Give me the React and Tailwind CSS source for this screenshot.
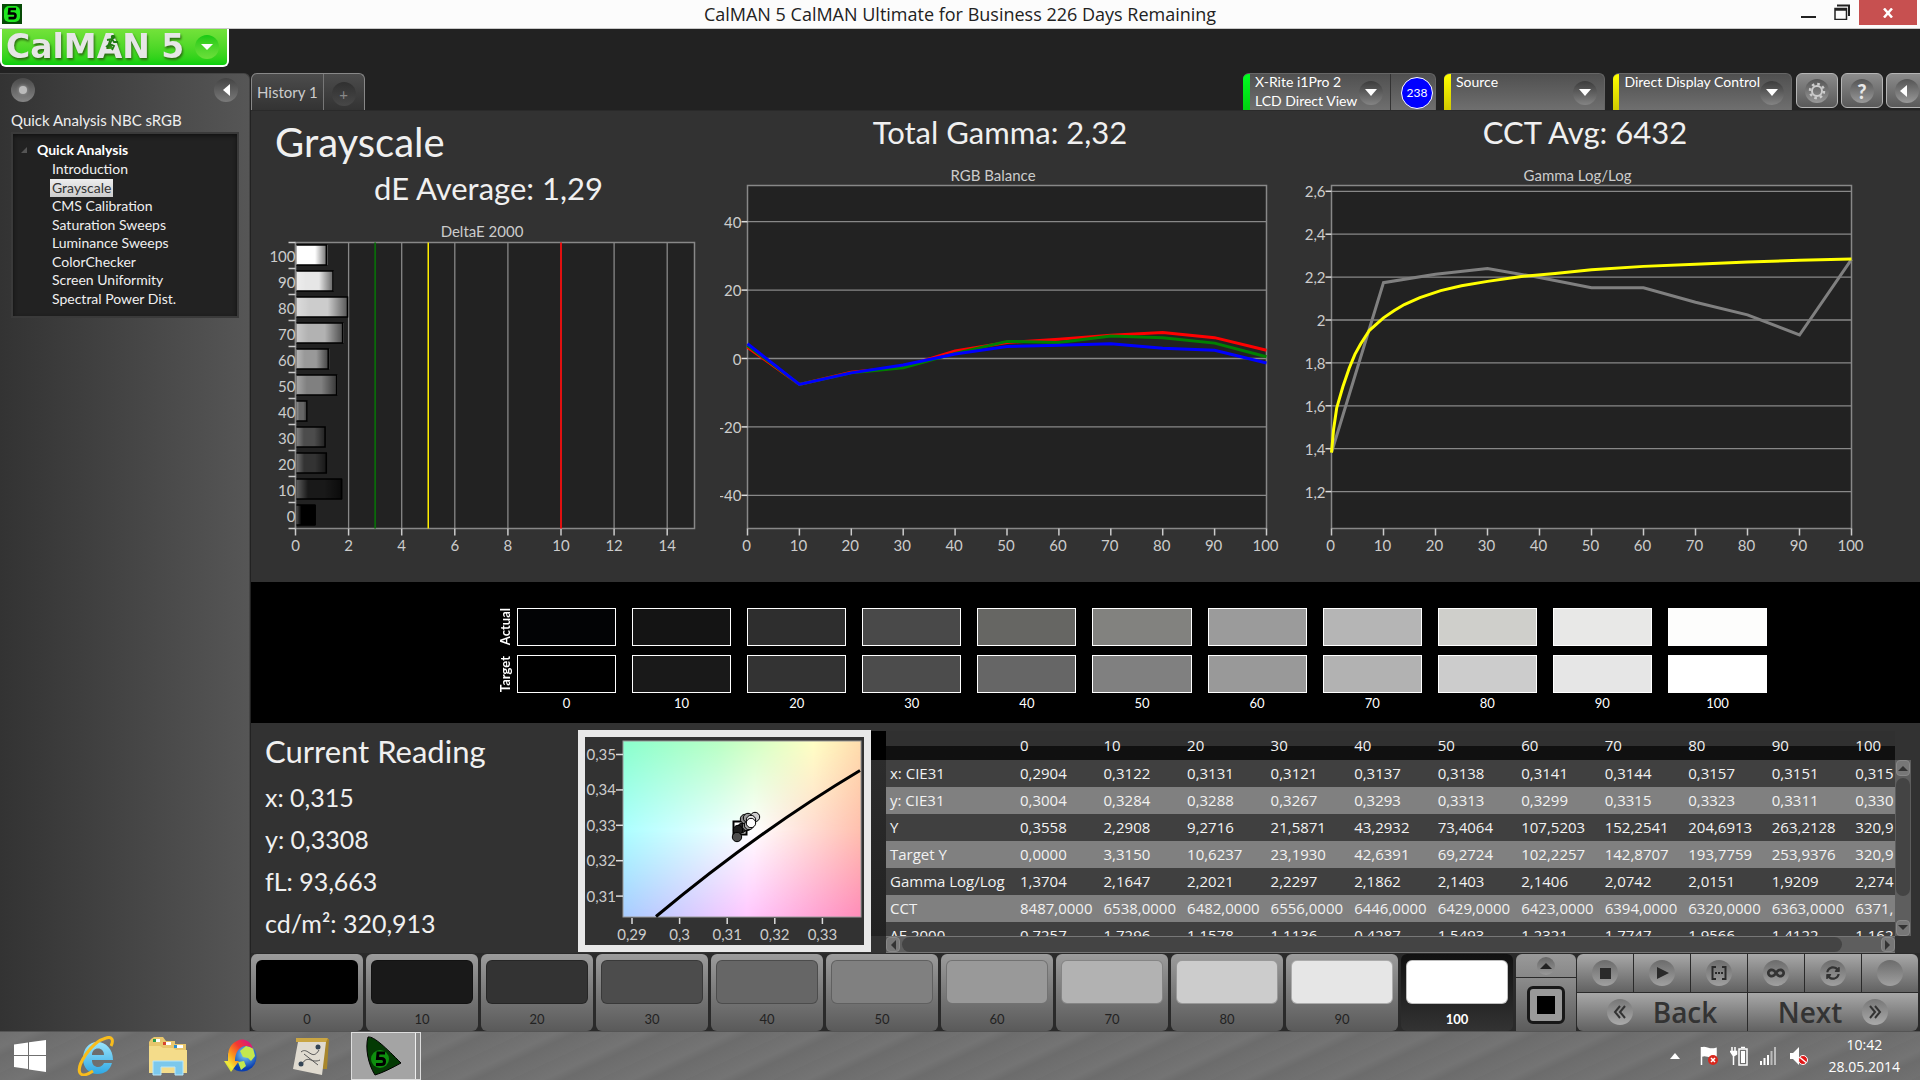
import { FaInfinity, FaSyncAlt } from 'react-icons/fa';
import clsx from 'clsx';

const LEVELS = [0, 10, 20, 30, 40, 50, 60, 70, 80, 90, 100];

const TARGET = ['#000000', '#191919', '#333333', '#4c4c4c', '#666666', '#808080', '#999999', '#b2b2b2', '#cccccc', '#e6e6e6', '#ffffff'];
const ACTUAL = ['#020305', '#141414', '#2e2e2e', '#494949', '#666663', '#82827f', '#9b9b9b', '#b5b5b5', '#cfcfcb', '#e8e8e7', '#fdfdfc'];

const DELTA_E = [0.7257, 1.7296, 1.1578, 1.1136, 0.4287, 1.5493, 1.2321, 1.7747, 1.9566, 1.4122, 1.162];

const TREE = [
  'Introduction',
  'Grayscale',
  'CMS Calibration',
  'Saturation Sweeps',
  'Luminance Sweeps',
  'ColorChecker',
  'Screen Uniformity',
  'Spectral Power Dist.',
];

const TABLE = [
  ['x: CIE31', '0,2904', '0,3122', '0,3131', '0,3121', '0,3137', '0,3138', '0,3141', '0,3144', '0,3157', '0,3151', '0,315'],
  ['y: CIE31', '0,3004', '0,3284', '0,3288', '0,3267', '0,3293', '0,3313', '0,3299', '0,3315', '0,3323', '0,3311', '0,330'],
  ['Y', '0,3558', '2,2908', '9,2716', '21,5871', '43,2932', '73,4064', '107,5203', '152,2541', '204,6913', '263,2128', '320,9'],
  ['Target Y', '0,0000', '3,3150', '10,6237', '23,1930', '42,6391', '69,2724', '102,2257', '142,8707', '193,7759', '253,9376', '320,9'],
  ['Gamma Log/Log', '1,3704', '2,1647', '2,2021', '2,2297', '2,1862', '2,1403', '2,1406', '2,0742', '2,0151', '1,9209', '2,274'],
  ['CCT', '8487,0000', '6538,0000', '6482,0000', '6556,0000', '6446,0000', '6429,0000', '6423,0000', '6394,0000', '6320,0000', '6363,0000', '6371,'],
  ['ΔE 2000', '0,7257', '1,7296', '1,1578', '1,1136', '0,4287', '1,5493', '1,2321', '1,7747', '1,9566', '1,4122', '1,162'],
];

function toPoints(values, sx, sy) {
  return values.map((v, i) => `${sx(LEVELS[i])},${sy(v)}`).join(' ');
}

function TitleBar() {
  return (
    <header className="relative flex h-[29px] items-center justify-center border-b border-[#c9c9c9] bg-[#fcfcfc]">
      <svg viewBox="0 0 20 20" className="absolute left-0.5 top-1 size-5">
        <rect width="20" height="20" fill="#064a06" />
        <rect x="2" y="2" width="16" height="16" rx="5" fill="#1fe81f" />
        <path d="M14 5H7.5L7 9.5h4.5q2 0 2 2.300t-2 2.300H6.500" fill="none" stroke="#000" strokeWidth="2.600" />
      </svg>
      <h1 className="font-['Open_Sans',sans-serif] text-lg leading-7 text-[#222]">
        CalMAN 5 CalMAN Ultimate for Business 226 Days Remaining
      </h1>
      <div className="absolute right-[3px] top-0 flex">
        <button type="button" aria-label="Minimize" className="flex h-[25px] w-8 items-start justify-center">
          <span className="mt-4 h-0.5 w-[15px] bg-[#222]" />
        </button>
        <button type="button" aria-label="Restore" className="flex h-[25px] w-[35px] justify-center pt-1">
          <svg viewBox="0 0 16 16" className="size-4" fill="none" stroke="#222">
            <path d="M1 15.500V4.500H12.500V15.500Z M1 6H12.500" strokeWidth="1.500" />
            <path d="M3 1.500H15V12" strokeWidth="2" />
          </svg>
        </button>
        <button type="button" aria-label="Close" className="flex h-[25px] w-[58px] items-center justify-center bg-[#c75050]">
          <svg viewBox="0 0 10 10" className="size-2.5" stroke="#fff" strokeWidth="2.500">
            <path d="M1 0.500 9 9.500M9 0.500 1 9.500" />
          </svg>
        </button>
      </div>
    </header>
  );
}

function Logo() {
  return (
    <button
      type="button"
      aria-label="CalMAN 5 menu"
      className="flex h-[38px] w-[229px] items-center rounded-b-md border-2 border-t-0 border-white bg-linear-to-b from-[#73e23a] to-[#06cf0d] pl-1"
    >
      <span className="relative w-[189px] text-left font-['DejaVu_Sans',sans-serif] text-[33px] leading-8 font-bold whitespace-nowrap text-[#e6e6e6] drop-shadow-[1px_2px_1px_#2a6a10]">
        CalMAN 5
        <svg viewBox="0 0 16 16" className="absolute left-[98px] top-1 size-4" fill="none" stroke="#1f7a12" strokeWidth="1.800">
          <circle cx="9" cy="2" r="1.300" fill="#1f7a12" />
          <path d="M3 5l5-1 2 3 4 0M8 4L6 9l4 2-2 4M6 9l-4 3" />
        </svg>
      </span>
      <span className="flex size-6 items-center justify-center rounded-full bg-linear-to-b from-[#12c912] to-[#6be03a]">
        <svg viewBox="0 0 12 6" className="h-1.5 w-3" fill="#fff">
          <path d="M0 0H12L6 6Z" />
        </svg>
      </span>
    </button>
  );
}

function Round({ className, children }) {
  return (
    <span className={clsx('flex shrink-0 items-center justify-center rounded-full', className)}>
      {children}
    </span>
  );
}

function Sidebar() {
  return (
    <aside className="flex w-[250px] shrink-0 flex-col rounded-tr-md border-t border-r border-[#444] bg-linear-to-r from-[#333] to-[#565656] pt-1">
      <div className="flex items-center justify-between pr-[11px] pl-[11px]">
        <button type="button" aria-label="Record">
          <Round className="size-6 bg-linear-to-b from-[#4a4a4a] to-[#858585]">
            <span className="size-2 rounded-full bg-[#bbb] shadow-[0_0_3px_1px_#888]" />
          </Round>
        </button>
        <button type="button" aria-label="Collapse panel">
          <Round className="size-6 bg-linear-to-b from-[#444] to-[#7a7a7a]">
            <svg viewBox="0 0 7 12" className="h-3 w-[7px]" fill="#fff">
              <path d="M7 0V12L0 6Z" />
            </svg>
          </Round>
        </button>
      </div>
      <h2 className="mt-[7px] pl-[11px] text-[15px] leading-[23px] text-[#eee]">Quick Analysis NBC sRGB</h2>
      <nav className="mr-2.5 ml-[11px] border-2 border-[#3a3a3a] bg-[#222] pt-1.5 pb-2 shadow-[inset_0_2px_4px_#111]">
        <div className="flex items-center text-sm leading-5 font-bold text-white">
          <svg viewBox="0 0 6 6" className="mr-2.5 ml-2 size-1.5" fill="#555">
            <path d="M6 0V6H0Z" />
          </svg>
          Quick Analysis
        </div>
        <ul className="flex h-[148px] flex-col justify-between pl-[37px] text-sm leading-[18px] text-[#f0f0f0]">
          {TREE.map((item) => (
            <li key={item} className="flex">
              <a
                href="#"
                className={clsx('px-0.5', item === 'Grayscale' && 'bg-linear-to-b from-[#eee] to-[#ccc] text-[#333]')}
              >
                {item}
              </a>
            </li>
          ))}
        </ul>
      </nav>
    </aside>
  );
}

function DownArrow() {
  return (
    <Round className="size-6 bg-linear-to-b from-[#3c3c3c] to-[#848484]">
      <svg viewBox="0 0 12 7" className="h-[7px] w-3" fill="#fff">
        <path d="M0 0H12L6 7Z" />
      </svg>
    </Round>
  );
}

function DeviceButton({ lines, color, className }) {
  return (
    <button
      type="button"
      className={clsx('flex h-[37px] items-center overflow-hidden pr-[7px] text-left text-sm leading-[19px] text-white', className)}
    >
      <span className={clsx('mr-[5px] h-full w-[7px]', color)} />
      <span className="-mt-0.5 flex-1 self-start whitespace-nowrap">
        {lines.map((line) => (
          <span key={line} className="block">{line}</span>
        ))}
      </span>
      <DownArrow />
    </button>
  );
}

function ToolButton({ label, children }) {
  return (
    <button
      type="button"
      aria-label={label}
      className="flex h-[35px] w-[42px] shrink-0 items-center justify-center rounded-md border border-[#b5b5b5] bg-linear-to-b from-[#8c8c8c] to-[#5a5a5a]"
    >
      <Round className="size-6 bg-linear-to-b from-[#555] to-[#999]">{children}</Round>
    </button>
  );
}

function TopTabs() {
  const shell = 'rounded-t-md border-t border-r border-[#666] bg-linear-to-b from-[#505050] to-[#707070]';
  return (
    <div className="flex h-[37px] items-start justify-between">
      <div className="flex h-full rounded-t-md border border-b-0 border-[#888] bg-linear-to-b from-[#4c4c4c] to-[#333] text-[15px] text-[#ccc]">
        <button type="button" className="border-r border-[#777] px-[5px]">History 1</button>
        <button type="button" aria-label="Add history" className="flex w-10 items-center justify-center pt-1">
          <Round className="size-6 bg-linear-to-b from-[#303030] to-[#484848] text-[#888]">+</Round>
        </button>
      </div>
      <div className="flex items-start gap-2 overflow-hidden">
        <div className={clsx('flex w-[193px] overflow-hidden', shell)}>
          <DeviceButton
            lines={['X-Rite i1Pro 2', 'LCD Direct View']}
            color="bg-linear-to-b from-[#00ff20] to-[#00d010]"
            className="flex-1 border-r border-[#333]"
          />
          <Round className="mr-0.5 ml-2.5 size-8 self-center border border-white bg-[#0000ff] text-xs text-white">238</Round>
        </div>
        <div className={clsx('w-[161px] overflow-hidden', shell)}>
          <DeviceButton lines={['Source']} color="bg-linear-to-b from-[#ffff00] to-[#d0c800]" className="w-full" />
        </div>
        <div className={clsx('w-[179px] overflow-hidden', shell)}>
          <DeviceButton
            lines={['Direct Display Control']}
            color="bg-linear-to-b from-[#ffff00] to-[#d0c800]"
            className="w-full"
          />
        </div>
        <div className="-mr-2 -ml-1 flex gap-[3px]">
          <ToolButton label="Settings">
            <svg viewBox="0 0 18 18" className="size-[18px]" fill="none" stroke="#ccc">
              <circle cx="9" cy="9" r="5" strokeWidth="2" />
              <circle cx="9" cy="9" r="7" strokeWidth="2.500" strokeDasharray="2.600 2.900" />
            </svg>
          </ToolButton>
          <ToolButton label="Help">
            <span className="text-xl leading-6 font-black text-[#e8e8e8]">?</span>
          </ToolButton>
          <ToolButton label="Collapse">
            <svg viewBox="0 0 7 12" className="mr-2 h-3 w-[7px]" fill="#fff">
              <path d="M7 0V12L0 6Z" />
            </svg>
          </ToolButton>
        </div>
      </div>
    </div>
  );
}

function DeltaChart() {
  const left = 44.5;
  const right = 443.5;
  const top = 22.5;
  const bottom = 308.5;
  const sx = (v) => left + v * 26.55;
  const row = 26;
  return (
    <svg viewBox="0 0 469 342" className="h-auto w-full text-[15px]" fill="#ccc">
      <defs>
        <linearGradient id="shine">
          <stop offset="0" stopColor="#fff" stopOpacity="0.3" />
          <stop offset="0.25" stopColor="#fff" stopOpacity="0" />
          <stop offset="0.6" stopColor="#000" stopOpacity="0" />
          <stop offset="1" stopColor="#000" stopOpacity="0.6" />
        </linearGradient>
      </defs>
      <text x="231" y="17" textAnchor="middle">DeltaE 2000</text>
      <rect x={left} y={top} width={right - left} height={bottom - top} fill="#222" stroke="#888" strokeWidth="1.500" />
      {[0, 2, 4, 6, 8, 10, 12, 14].map((v) => (
        <g key={v}>
          <path d={`M${sx(v)} ${top}V${bottom}`} stroke="#888" strokeWidth="1.300" />
          <path d={`M${sx(v)} ${bottom}v7`} stroke="#ccc" strokeWidth="1.500" />
          <text x={sx(v)} y="331" textAnchor="middle">{v}</text>
        </g>
      ))}
      {[...LEVELS].reverse().map((level, i) => {
        const y = top + i * row;
        const n = level / 10;
        const w = DELTA_E[n] * 26.55;
        return (
          <g key={level}>
            <path d={`M${left - 7} ${y}h7`} stroke="#ccc" strokeWidth="1.500" />
            <text x={left} y={y + 19} textAnchor="end">{level}</text>
            <rect x={left + 1} y={y + 2.5} width={w} height="20" fill={TARGET[n]} />
            <rect x={left + 1} y={y + 2.5} width={w} height="20" fill="url(#shine)" />
            <path d={`M${left + 1} ${y + 2.5}h${w - 1}v20h${1 - w}`} fill="none" stroke="#000" strokeWidth="1.500" />
          </g>
        );
      })}
      <path d={`M${left - 7} ${bottom}h7`} stroke="#ccc" strokeWidth="1.500" />
      <path d={`M${sx(3)} ${top}V${bottom}`} stroke="#0a6a0a" strokeWidth="1.800" />
      <path d={`M${sx(5)} ${top}V${bottom}`} stroke="#ffee00" strokeWidth="1.500" />
      <path d={`M${sx(10)} ${top}V${bottom}`} stroke="#e01010" strokeWidth="2" />
    </svg>
  );
}

function PlotFrame({ title, left, right, yTicks, sx, sy }) {
  return (
    <>
      <text x={(left + right) / 2 - 14} y="17" textAnchor="middle">{title}</text>
      <rect x={left} y="21.500" width={right - left} height="343" fill="#222" stroke="#888" strokeWidth="1.500" />
      {yTicks.map((v) => (
        <g key={v}>
          <path d={`M${left} ${sy(v)}H${right}`} stroke="#888" strokeWidth="1.300" />
          <path d={`M${left - 6} ${sy(v)}h6`} stroke="#ddd" strokeWidth="1.500" />
          <text x={left - 6} y={sy(v) + 6} textAnchor="end">{String(v).replace('.', ',')}</text>
        </g>
      ))}
      {LEVELS.map((v) => (
        <g key={v}>
          <path d={`M${sx(v)} 364.500v7`} stroke="#ccc" strokeWidth="1.500" />
          <text x={sx(v) - 1} y="387" textAnchor="middle">{v}</text>
        </g>
      ))}
    </>
  );
}

function BalanceChart() {
  const sx = (v) => 27.5 + v * 5.19;
  const sy = (v) => 194.5 - v * 3.42;
  const red = [3.3, -7.6, -4, -2.5, 2.2, 4.7, 5.6, 6.8, 7.6, 6.1, 2.4];
  const green = [3.8, -7.6, -4.2, -2.7, 1.5, 5, 4.7, 6.6, 6.1, 4.5, 0.5];
  const blue = [4.3, -7.6, -4.2, -1.9, 1.3, 3.5, 3.9, 4.3, 3, 2.4, -1.3];
  return (
    <svg viewBox="0 0 580 398" className="h-auto w-full text-[15px]" fill="#ccc">
      <PlotFrame title="RGB Balance" left={27.5} right={546.5} yTicks={[40, 20, 0, -20, -40]} sx={sx} sy={sy} />
      <g fill="none" strokeWidth="3">
        <polyline points={toPoints(red, sx, sy)} stroke="#ff0000" />
        <polyline points={toPoints(green, sx, sy)} stroke="#008000" />
        <polyline points={toPoints(blue, sx, sy)} stroke="#0000ff" />
      </g>
    </svg>
  );
}

function GammaChart() {
  const sx = (v) => 31.5 + v * 5.2;
  const sy = (v) => 156 - (v - 2) * 214.5;
  const measured = [1.382, 2.174, 2.213, 2.24, 2.198, 2.15, 2.15, 2.083, 2.024, 1.93, 2.283];
  // reference curve as [stimulus, gamma]
  const curve = [
    [0, 1.382], [0.4, 1.49], [1, 1.59], [2.2, 1.69], [3.4, 1.775], [4.5, 1.84], [5.6, 1.888], [7.3, 1.952],
    [10, 2.01], [12, 2.043], [14, 2.072], [17, 2.104], [21, 2.137], [25, 2.16], [30, 2.18], [36.5, 2.203],
    [43, 2.217], [50, 2.234], [60, 2.25], [70, 2.26], [80, 2.27], [90, 2.278], [100, 2.284],
  ];
  return (
    <svg viewBox="0 0 620 398" className="h-auto w-full text-[15px]" fill="#ccc">
      <PlotFrame
        title="Gamma Log/Log"
        left={31.5}
        right={551.5}
        yTicks={[2.6, 2.4, 2.2, 2, 1.8, 1.6, 1.4, 1.2]}
        sx={sx}
        sy={sy}
      />
      <g fill="none" strokeWidth="3">
        <polyline points={toPoints(measured, sx, sy)} stroke="#808080" />
        <polyline points={curve.map(([x, y]) => `${sx(x)},${sy(y)}`).join(' ')} stroke="#ffff00" />
      </g>
    </svg>
  );
}

function Charts() {
  const heading = 'pb-3 text-center text-[31px] leading-10 text-[#f0f0f0]';
  return (
    <section className="grid grid-cols-[469fr_580fr_620fr] border-t border-[#2a2a2a] pb-5">
      <div>
        <h2 className="pt-1.5 pl-6 text-[40px] leading-[50px] text-[#f0f0f0]">Grayscale</h2>
        <p className={clsx(heading, 'pt-px pl-1.5')}>dE Average: 1,29</p>
        <DeltaChart />
      </div>
      <div>
        <p className={clsx(heading, 'pt-px pr-5')}>Total Gamma: 2,32</p>
        <BalanceChart />
      </div>
      <div>
        <p className={clsx(heading, 'pt-px pr-[50px]')}>CCT Avg: 6432</p>
        <GammaChart />
      </div>
    </section>
  );
}

function Swatches() {
  return (
    <section className="bg-black pt-[26px] pr-[153px] pb-3 pl-[247px] text-[13px] text-white">
      {[['Actual', ACTUAL], ['Target', TARGET]].map(([name, colors]) => (
        <div key={name} className="mb-[9px] flex h-[38px] items-center">
          <span className="w-[19px] rotate-180 pl-1 text-center leading-[14px] font-bold [writing-mode:vertical-rl]">{name}</span>
          <div className="grid h-full flex-1 grid-cols-11 gap-4">
            {colors.map((c) => (
              <div key={c} className="border border-white" style={{ backgroundColor: c }} />
            ))}
          </div>
        </div>
      ))}
      <div className="-mt-[7px] grid grid-cols-11 gap-4 pl-[19px] text-center leading-4">
        {LEVELS.map((v) => (
          <span key={v}>{v}</span>
        ))}
      </div>
    </section>
  );
}

function Reading() {
  return (
    <section className="w-[327px] shrink-0 pl-3.5 text-[25px] leading-[42px] text-[#f0f0f0]">
      <h2 className="pt-[3px] text-[31px] leading-[50px]">Current Reading</h2>
      <p>x: 0,315</p>
      <p>y: 0,3308</p>
      <p>fL: 93,663</p>
      <p>cd/m²: 320,913</p>
    </section>
  );
}

function CieChart() {
  const dots = [
    [157, 91, '#222'], [153, 93, '#1c1c1c'], [152, 100, '#4c4c4c'], [162, 89, '#888'], [160, 82, '#8a8a8a'],
    [163, 81, '#999'], [164, 88, '#aaa'], [170, 80, '#ccc'], [166, 83, '#e6e6e6'], [166, 86, '#fff'],
  ];
  return (
    <div className="mt-[7px] w-[293px] shrink-0 self-start border-[7px] border-[#e8e8e8] bg-[#323232]">
      <svg viewBox="0 0 279 208" className="block h-auto w-full text-[15px]" fill="#ccc">
        <defs>
          <linearGradient id="cieTop">
            <stop offset="0" stopColor="#8affcc" />
            <stop offset="0.4" stopColor="#b8ffc4" />
            <stop offset="0.8" stopColor="#ffffc4" />
            <stop offset="1" stopColor="#ffdcac" />
          </linearGradient>
          <linearGradient id="cieMid">
            <stop offset="0" stopColor="#acffff" />
            <stop offset="0.55" stopColor="#ffffff" />
            <stop offset="1" stopColor="#ffc0ae" />
          </linearGradient>
          <linearGradient id="cieBottom">
            <stop offset="0" stopColor="#a8ccff" />
            <stop offset="0.52" stopColor="#ffc8ff" />
            <stop offset="1" stopColor="#ff8cb8" />
          </linearGradient>
          <linearGradient id="fadeDown" x2="0" y2="1">
            <stop offset="0" stopColor="#fff" />
            <stop offset="0.5" stopColor="#000" />
          </linearGradient>
          <linearGradient id="fadeUp" x2="0" y2="1">
            <stop offset="0.5" stopColor="#000" />
            <stop offset="1" stopColor="#fff" />
          </linearGradient>
          <mask id="maskTop"><rect x="38" y="4" width="238" height="176" fill="url(#fadeDown)" /></mask>
          <mask id="maskBottom"><rect x="38" y="4" width="238" height="176" fill="url(#fadeUp)" /></mask>
        </defs>
        <rect x="38" y="4" width="238" height="176" fill="url(#cieMid)" />
        <rect x="38" y="4" width="238" height="176" fill="url(#cieTop)" mask="url(#maskTop)" />
        <rect x="38" y="4" width="238" height="176" fill="url(#cieBottom)" mask="url(#maskBottom)" />
        <rect x="38" y="4" width="238" height="176" fill="none" stroke="#999" />
        {['0,35', '0,34', '0,33', '0,32', '0,31'].map((t, i) => (
          <g key={t}>
            <path d={`M31 ${17.5 + i * 35.4}h7`} stroke="#ddd" strokeWidth="1.500" />
            <text x="31" y={23 + i * 35.4} textAnchor="end">{t}</text>
          </g>
        ))}
        {['0,29', '0,3', '0,31', '0,32', '0,33'].map((t, i) => (
          <g key={t}>
            <path d={`M${47 + i * 47.6} 181v6`} stroke="#ddd" strokeWidth="1.500" />
            <text x={47 + i * 47.6} y="203" textAnchor="middle">{t}</text>
          </g>
        ))}
        <path d="M71 179.500Q172 95 275 33.500" fill="none" stroke="#000" strokeWidth="3" />
        <rect x="148.500" y="84.500" width="13" height="13" fill="#fff" stroke="#000" strokeWidth="2" />
        {dots.map(([x, y, fill]) => (
          <circle key={`${x}-${y}`} cx={x} cy={y} r="4.700" fill={fill} stroke="#000" />
        ))}
      </svg>
    </div>
  );
}

function ScrollButton({ label, d, className }) {
  return (
    <button type="button" aria-label={label} className={clsx('flex items-center justify-center rounded-sm border border-[#888] bg-[#777]', className)}>
      <svg viewBox="0 0 10 10" className="size-2.5" fill="#333">
        <path d={d} />
      </svg>
    </button>
  );
}

function DataTable() {
  return (
    <section className="mt-2 flex min-w-0 flex-1 pr-[9px]">
      <div className="flex w-[15px] flex-col">
        <div className="h-[29px] bg-black" />
        <div className="h-[176px] bg-linear-to-b from-[#2c2c2c] to-[#222]" />
      </div>
      <div className="min-w-0 flex-1">
        <div className="h-[205px] overflow-hidden">
          <table className="w-[1049px] table-fixed border-collapse text-left font-['Open_Sans',sans-serif] text-[15px] whitespace-nowrap text-[#f2f2f2]">
            <thead>
              <tr className="h-[29px] bg-linear-to-b from-[#303030] from-50% to-[#101010] to-50%">
                <th className="w-[130px]" aria-label="Measurement" />
                {LEVELS.map((v) => (
                  <th key={v} scope="col" className="p-0 pl-1 font-normal">{v}</th>
                ))}
              </tr>
            </thead>
            <tbody>
              {TABLE.map(([label, ...cells]) => (
                <tr key={label} className="h-[27px] odd:bg-[#404040] even:bg-[#808080]">
                  <th scope="row" className="p-0 pl-1 font-normal">{label}</th>
                  {cells.map((c, i) => (
                    <td key={i} className="p-0 pl-1">{c}</td>
                  ))}
                </tr>
              ))}
            </tbody>
          </table>
        </div>
        <div className="flex h-[17px] items-center justify-between border-y border-[#777] bg-[#5e5e5e]">
          <ScrollButton label="Scroll left" d="M8 0V10L3 5Z" className="h-[15px] w-3.5" />
          <div className="mr-[39px] ml-0.5 h-[15px] flex-1 rounded-full bg-[#444]" />
          <ScrollButton label="Scroll right" d="M2 0V10L7 5Z" className="h-[15px] w-3.5" />
        </div>
      </div>
      <div className="mt-[29px] flex h-[176px] w-4 flex-col items-center bg-[#5e5e5e]">
        <ScrollButton label="Scroll up" d="M0 8H10L5 3Z" className="h-4 w-3.5" />
        <div className="mt-0.5 mb-6 w-3.5 flex-1 rounded-full bg-[#444]" />
        <ScrollButton label="Scroll down" d="M0 2H10L5 7Z" className="h-4 w-3.5" />
      </div>
    </section>
  );
}

function StepButton({ level, color }) {
  const active = level === 100;
  return (
    <button
      type="button"
      className={clsx(
        'flex min-w-0 flex-1 flex-col items-center rounded-md px-[5px] pt-1.5 text-[13px] leading-6',
        active ? 'bg-linear-to-b from-[#111] to-[#333] font-bold text-white' : 'bg-linear-to-b from-[#9c9c9c] to-[#5a5a5a] text-[#222]',
      )}
    >
      <span className="h-[46px] w-full rounded-md border border-black/25" style={{ backgroundColor: color }} />
      <span className="pt-[3px]">{level}</span>
    </button>
  );
}

function ControlButton({ label, children }) {
  return (
    <button
      type="button"
      aria-label={label}
      className="flex h-[38px] flex-1 items-center justify-center bg-linear-to-b from-[#a8a8a8] to-[#626262] text-[#333]"
    >
      <Round className="size-[26px] bg-linear-to-b from-[#6c6c6c] to-[#a0a0a0]">{children}</Round>
    </button>
  );
}

function Transport() {
  const wide = "flex h-[38px] flex-1 items-center justify-center bg-linear-to-b from-[#a8a8a8] to-[#626262] font-['Open_Sans',sans-serif] text-[28px] leading-8 font-semibold text-[#333]";
  return (
    <div className="flex w-[402px] shrink-0 gap-px">
      <div className="flex w-[60px] flex-col gap-px">
        <button type="button" aria-label="Expand" className="flex h-[23px] items-center justify-center rounded-t-md bg-linear-to-b from-[#999] to-[#888]">
          <Round className="size-[18px] bg-linear-to-b from-[#666] to-[#999]">
            <svg viewBox="0 0 12 6" className="h-1.5 w-3" fill="#222"><path d="M0 6H12L6 0Z" /></svg>
          </Round>
        </button>
        <button type="button" aria-label="Pattern window" className="flex flex-1 items-center justify-center bg-linear-to-b from-[#8c8c8c] to-[#5c5c5c]">
          <span className="flex size-[38px] items-center justify-center rounded-md border-[3px] border-[#181818] bg-[#999]">
            <span className="size-[18px] bg-black" />
          </span>
        </button>
      </div>
      <div className="flex flex-1 flex-col gap-px overflow-hidden rounded-md">
        <div className="flex gap-px">
          <ControlButton label="Stop"><span className="size-[11px] bg-[#2a2a2a]" /></ControlButton>
          <ControlButton label="Play">
            <svg viewBox="0 0 12 12" className="ml-0.5 size-3" fill="#2a2a2a"><path d="M0 0 12 6 0 12Z" /></svg>
          </ControlButton>
          <ControlButton label="Read series">
            <svg viewBox="0 0 16 14" className="h-3.5 w-4" fill="none" stroke="#2a2a2a" strokeWidth="2">
              <path d="M5 1H1.500V13H5M11 1H14.500V13H11M4 7H6M7 7H9M10 7H12" />
            </svg>
          </ControlButton>
          <ControlButton label="Read continuous"><FaInfinity className="size-[18px]" /></ControlButton>
          <ControlButton label="Refresh"><FaSyncAlt className="size-3.5" /></ControlButton>
          <ControlButton label="More" />
        </div>
        <div className="flex gap-px">
          <button type="button" className={wide}>
            <Round className="mr-5 size-[26px] bg-linear-to-b from-[#777] to-[#aaa]">
              <svg viewBox="0 0 14 14" className="size-3.5" fill="none" stroke="#333" strokeWidth="2"><path d="M7 1 2 7l5 6M12 1 7 7l5 6" /></svg>
            </Round>
            Back
          </button>
          <button type="button" className={wide}>
            Next
            <Round className="ml-5 size-[26px] bg-linear-to-b from-[#777] to-[#aaa]">
              <svg viewBox="0 0 14 14" className="size-3.5" fill="none" stroke="#333" strokeWidth="2"><path d="M2 1l5 6-5 6M7 1l5 6-5 6" /></svg>
            </Round>
          </button>
        </div>
      </div>
    </div>
  );
}

function Taskbar() {
  return (
    <footer className="flex h-[49px] items-center justify-between border-t border-[#555] bg-[repeating-linear-gradient(155deg,#6f6f6f_0px,#747474_14px,#6c6c6c_22px,#717171_37px)] text-white">
      <div className="flex h-full items-center">
        <button type="button" aria-label="Start" className="ml-[13px] w-[34px]">
          <svg viewBox="0 0 34 34" className="size-[34px]" fill="#fff">
            <path d="M1 5.500 15 3.500V16H1ZM16 3.300 33 1V16H16ZM1 17H15V30L1 28ZM16 17H33V33L16 30.500Z" />
          </svg>
        </button>
        <button type="button" aria-label="Internet Explorer" className="ml-[29px]">
          <svg viewBox="0 0 40 40" className="size-10">
            <defs>
              <linearGradient id="ieBlue" x2="0" y2="1">
                <stop offset="0" stopColor="#9be4fb" />
                <stop offset="1" stopColor="#2fa8e4" />
              </linearGradient>
            </defs>
            <path
              fillRule="evenodd"
              d="M21 6C30 6 37 13 37 24H16C16 29 19 31 22 31C25 31 27 29 28 27H36C34 34 29 38 21.500 38C13 38 7 32 7 22.500C7 13 13 6 21 6ZM16 19H28C28 15 25.500 12.500 22 12.500C18.500 12.500 16 15 16 19Z"
              fill="url(#ieBlue)"
            />
            <path d="M17 35C11 39 6 40 4 37C0 30 15 6 30 2C36 0 38 4 35 10" fill="none" stroke="#f8bc1c" strokeWidth="3" />
          </svg>
        </button>
        <button type="button" aria-label="File Explorer" className="ml-8">
          <svg viewBox="0 0 40 40" className="size-10">
            <path d="M3 3 6 1H15L18 5H27V8H38V37H1V6Z" fill="#e8c66c" />
            <path d="M5 3H12V6H5Z" fill="#fff" /><path d="M5 3H8V6H5Z" fill="#2a9d4a" />
            <path d="M15 6H23V9H15Z" fill="#fff" /><path d="M15 6H18V9H15Z" fill="#d8452c" />
            <path d="M26 9H35V12H26Z" fill="#fff" /><path d="M26 9H29V12H26Z" fill="#2b8fd0" />
            <path d="M1 10H12L15 12H25L28 14H39V37H1Z" fill="#f4dc8a" />
            <path d="M5 25H35V39H27V31H13V39H5Z" fill="#7cc8ec" stroke="#b8e6fa" />
          </svg>
        </button>
        <button type="button" aria-label="Color tool" className="ml-[34px]">
          <svg viewBox="0 0 38 38" className="size-[38px]">
            <defs>
              <radialGradient id="globe" cx="0.6" cy="0.4">
                <stop offset="0" stopColor="#7fd4f8" />
                <stop offset="1" stopColor="#0a3fb0" />
              </radialGradient>
              <linearGradient id="hueArrow" x1="1" x2="0" y2="1">
                <stop offset="0.1" stopColor="#d8187c" />
                <stop offset="0.35" stopColor="#f43a30" />
                <stop offset="0.6" stopColor="#fb9a1c" />
                <stop offset="0.8" stopColor="#f4ea3a" />
                <stop offset="1" stopColor="#8ccf2c" />
              </linearGradient>
            </defs>
            <circle cx="20" cy="20" r="14.500" fill="url(#globe)" />
            <path d="M18 14 24 9 31 11 33 19 29 24 26 21 21 20Z M16 25 22 24 24 29 19 33Z" fill="#c3e84e" />
            <path d="M30 9C27 3 20 1 15 4C8 7 5 14 6 24H2L9 35 17 24H13C13 16 17 9 24 9C27 9 29 10 31 12Z" fill="url(#hueArrow)" />
          </svg>
        </button>
        <button type="button" aria-label="Notes" className="ml-8">
          <svg viewBox="0 0 40 40" className="size-10">
            <path d="M6 3H37L35 33H30Z" fill="#a8862c" />
            <path d="M6 6H34L30 39 1 33Z" fill="#e0dbd0" />
            <path d="M4 2H36L34 6H4Z" fill="#c9a543" />
            <path d="M9 16C16 10 20 26 27 14M10 28C16 18 20 28 28 24M12 18 26 29" fill="none" stroke="#555" />
            <circle cx="26" cy="11" r="2.500" fill="#345" /><circle cx="9" cy="28" r="2.500" fill="#345" />
          </svg>
        </button>
        <button
          type="button"
          aria-label="CalMAN 5"
          className="ml-[19px] flex h-12 w-[70px] border border-[#ddd] bg-[#a4a4a4] pr-1 shadow-[inset_-4px_0_0_#8a8a8a]"
        >
          <span className="flex h-full w-[64px] items-center justify-center border-r border-[#eee]">
            <svg viewBox="0 0 36 40" className="h-10 w-9">
              <path d="M2 1C8 0 20 12 35 27 26 32 16 37 9 39 2 28-1 12 2 1Z" fill="#043a04" stroke="#000" />
              <circle cx="14" cy="23" r="9" fill="#12a512" opacity="0.8" />
              <path d="M19 17H12L11.500 22.500h4q3 0 3 3t-3 3H10" fill="none" stroke="#000" strokeWidth="3" />
            </svg>
          </span>
        </button>
      </div>
      <div className="flex items-center gap-3 pr-5">
        <svg viewBox="0 0 10 6" className="mr-2 h-1.5 w-2.5" fill="#fff"><path d="M0 6H10L5 0Z" /></svg>
        <svg viewBox="0 0 18 20" className="h-5 w-[18px]">
          <path d="M1.500 1V19M2 2C6 0 9 5 16 2.500V10C9 12 6 8 2 10Z" fill="#fff" stroke="#fff" strokeWidth="1.500" />
          <circle cx="13" cy="14" r="5" fill="#d9281e" />
          <path d="M11 12l4 4M15 12l-4 4" stroke="#fff" strokeWidth="1.500" />
        </svg>
        <svg viewBox="0 0 18 20" className="h-5 w-[18px]" fill="none" stroke="#fff" strokeWidth="1.500">
          <path d="M2 1V5M5 1V5M0.500 5.500H6.500V8L3.500 10ZM3.500 10V19" fill="#fff" />
          <rect x="9" y="3" width="8" height="16" stroke="#fff" /><path d="M11 1.500H15" />
          <rect x="11" y="5" width="4" height="12" fill="#fff" stroke="none" />
        </svg>
        <svg viewBox="0 0 17 18" className="h-[18px] w-[17px]" fill="#fff">
          <path d="M0 14H2V18H0ZM3.500 11H5.500V18H3.500ZM7 8H9V18H7Z" />
          <path d="M10.500 4H12.500V18H10.500ZM14 0H16V18H14Z" fill="#bbb" />
        </svg>
        <svg viewBox="0 0 20 20" className="size-5">
          <path d="M1 7H4L10 1V19L4 13H1Z" fill="#fff" />
          <circle cx="14" cy="14" r="4.500" fill="#e01818" stroke="#fff" /><path d="M11 11.500 17 16.500" stroke="#fff" strokeWidth="1.500" />
        </svg>
        <div className="ml-2 text-center font-['Open_Sans',sans-serif] text-sm leading-[22px]">
          <div>10:42</div>
          <div>28.05.2014</div>
        </div>
      </div>
    </footer>
  );
}

export default function App() {
  return (
    <div className="flex min-h-screen flex-col overflow-hidden bg-[#222] font-[Lato,sans-serif]">
      <TitleBar />
      <div className="pb-1.5">
        <Logo />
      </div>
      <div className="flex flex-1">
        <Sidebar />
        <main className="flex min-w-0 flex-1 flex-col pl-px">
          <TopTabs />
          <div className="flex flex-1 flex-col bg-[#323232]">
            <Charts />
            <Swatches />
            <div className="flex flex-1">
              <Reading />
              <CieChart />
              <DataTable />
            </div>
            <div className="flex h-[78px] gap-[3px] bg-[#2a2a2a] pt-px pr-0.5">
              {LEVELS.map((v, i) => (
                <StepButton key={v} level={v} color={TARGET[i]} />
              ))}
              <Transport />
            </div>
          </div>
        </main>
      </div>
      <Taskbar />
    </div>
  );
}
